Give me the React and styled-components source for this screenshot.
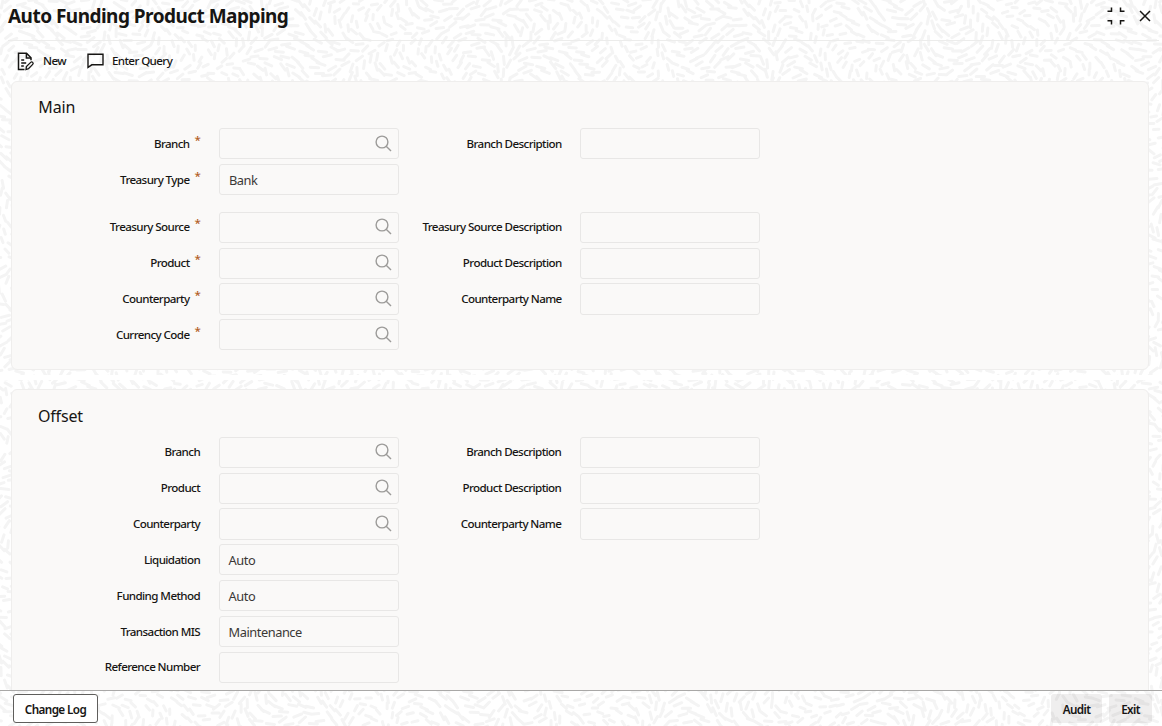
import React from "react";
import styled, { createGlobalStyle } from "styled-components";

const GlobalStyle = createGlobalStyle`
  * {
    box-sizing: border-box;
  }
  body {
    margin: 0;
    overflow: hidden;
    background: #ffffff;
    color: #161513;
    font-family: "Noto Sans", "Open Sans", sans-serif;
  }
`;

// Scattered short strokes that follow a slowly turning direction
const buildStrokes = (width, height) => {
  const parts = [];
  let row = 0;
  for (let y = 2; y < height + 8; y += 8) {
    for (let x = (row % 2) * 5.2; x < width + 8; x += 10.4) {
      const jx = Math.sin(x * 12.9 + y * 7.3) * 2.4;
      const jy = Math.cos(x * 5.1 + y * 9.7) * 2.4;
      const angle =
        2.2 * Math.sin(x / 43 + y / 71) +
        1.8 * Math.cos(y / 37 - x / 67) +
        0.3 * Math.sin(x * 3.3 + y * 1.7);
      const len = 2.6 + Math.abs(Math.sin(x * 2.1 + y)) * 1.6;
      const dx = Math.cos(angle) * len;
      const dy = Math.sin(angle) * len;
      const cx = x + jx;
      const cy = y + jy;
      parts.push(
        `M${(cx - dx).toFixed(1)} ${(cy - dy).toFixed(1)}L${(cx + dx).toFixed(1)} ${(cy + dy).toFixed(1)}`
      );
    }
    row += 1;
  }
  return parts.join("");
};

const strokes = buildStrokes(1162, 726);

const Screen = styled.div`
  position: relative;
  display: flex;
  flex-direction: column;
  width: 1162px;
  height: 726px;
  overflow: hidden;
`;

const Texture = styled.svg`
  position: absolute;
  inset: 0;
  z-index: -1;
`;

const Header = styled.header`
  display: flex;
  align-items: center;
  justify-content: space-between;
  flex: none;
  height: 41px;
  margin: 0 3px 0 8px;
  padding: 0 8px 8px 0;
  border-bottom: 1px solid #ececeb;
`;

const Title = styled.h1`
  margin: 0;
  font-size: 19px;
  font-weight: 700;
  line-height: 26px;
  letter-spacing: -0.53px;
  white-space: nowrap;
`;

const WindowActions = styled.div`
  display: flex;
  align-items: center;
  gap: 14px;
`;

const Toolbar = styled.nav`
  display: flex;
  align-items: center;
  gap: 21px;
  flex: none;
  height: 40px;
  padding-left: 17px;
`;

const ToolButton = styled.button`
  display: flex;
  align-items: center;
  gap: 8px;
  padding: 0;
  border: none;
  background: none;
  color: #161513;
  font-family: inherit;
  font-size: 11.6px;
  font-weight: 500;
  line-height: 18px;
  letter-spacing: -0.6px;
`;

const Content = styled.main`
  display: flex;
  flex-direction: column;
  flex: 1;
  min-height: 0;
  overflow: hidden;
`;

const Panel = styled.section`
  flex: none;
  height: ${(p) => p.$height}px;
  margin-left: ${(p) => p.$left}px;
  width: 1138px;
  padding: 13px 26px 0;
  background: #faf9f8;
  border: 1px solid #efeeed;
  border-radius: 6px;
`;

const Divider = styled.div`
  flex: none;
  height: 5px;
  margin: 5px 0 9px;
  background: #ffffff;
`;

const PanelTitle = styled.h2`
  margin: 0;
  padding-top: ${(p) => p.$offset || 0}px;
  height: ${(p) => 33.2 + (p.$offset || 0)}px;
  font-size: 16px;
  font-weight: 400;
  line-height: 24px;
  letter-spacing: -0.15px;
`;

const Row = styled.div`
  display: grid;
  grid-template-columns: 162.2px 180px 144.2px 180px;
  column-gap: 18.5px;
  align-items: center;
  height: 31.2px;
  margin-bottom: ${(p) => (p.$spaced ? 16.6 : 4.65)}px;
`;

const Label = styled.label`
  display: flex;
  justify-content: flex-end;
  font-size: 11.6px;
  font-weight: 500;
  line-height: 18px;
  letter-spacing: -0.59px;
  white-space: nowrap;
`;

const Required = styled.span`
  width: 11px;
  padding-left: 5px;
  margin-top: -4px;
  color: #b35f26;
`;

const Field = styled.div`
  display: flex;
  align-items: center;
  justify-content: space-between;
  height: 31.2px;
  padding: 0 5.5px 0 9px;
  border: 1px solid #e8e7e6;
  border-radius: 3px;
  font-size: 12.8px;
  font-weight: 400;
  letter-spacing: -0.45px;
  color: #3a3836;
`;

const Footer = styled.footer`
  display: flex;
  align-items: flex-start;
  gap: 7px;
  flex: none;
  height: 36px;
  padding: 3px 10px 0 13px;
  border-top: 1px solid #a9a8a7;
`;

const FooterButton = styled.button`
  width: ${(p) => p.$width}px;
  height: 29px;
  padding: 0;
  border: 1px solid ${(p) => (p.$outlined ? "#5f5e5c" : "transparent")};
  border-radius: 3px;
  background: ${(p) => (p.$outlined ? "#ffffff" : "rgba(22, 21, 19, 0.07)")};
  color: #161513;
  font-family: inherit;
  font-size: 11.7px;
  font-weight: 600;
  letter-spacing: -0.6px;
`;

const Spacer = styled.div`
  flex: 1;
`;

const SearchIcon = () => (
  <svg width="17" height="18" viewBox="0 0 17 18" fill="none" stroke="#9c9b99" strokeWidth="1.4">
    <circle cx="7" cy="7" r="5.9" />
    <path d="M11.2 11.2L16 16" />
  </svg>
);

const NewIcon = () => (
  <svg width="18" height="19" viewBox="0 0 18 19" fill="none" stroke="#161513" strokeWidth="1.5">
    <path d="M7.5 17.4H1.5V1.2h8L14 5.8v2.4" />
    <path d="M9.4 1.4V6H14" />
    <path d="M4.2 8h3M4.2 11h5M4.2 14h2.6" />
    <path d="M9 17.5l.4-2.9 4.3-4.2c.6-.6 1.5-.5 2 0s.6 1.4 0 2l-4.2 4.3z" strokeWidth="1.3" />
  </svg>
);

const QueryIcon = () => (
  <svg width="17" height="16" viewBox="0 0 17 16" fill="none" stroke="#161513" strokeWidth="1.4">
    <path d="M1 1.2h15v10.6H4.8L1 14.4z" />
  </svg>
);

const CollapseIcon = () => (
  <svg width="18" height="18" viewBox="0 0 18 18" fill="none" stroke="#161513" strokeWidth="1.5">
    <path d="M0.5 4.2h4V0.5M17.5 4.2h-4V0.5M0.5 13.8h4v3.7M17.5 13.8h-4v3.7" />
  </svg>
);

const CloseIcon = () => (
  <svg width="12" height="12" viewBox="0 0 12 12" fill="none" stroke="#161513" strokeWidth="1.5">
    <path d="M1 1l10 10M11 1L1 11" />
  </svg>
);

const mainRows = [
  { label: "Branch", required: true, lookup: true, description: "Branch Description" },
  { label: "Treasury Type", required: true, value: "Bank", spaced: true },
  { label: "Treasury Source", required: true, lookup: true, description: "Treasury Source Description" },
  { label: "Product", required: true, lookup: true, description: "Product Description" },
  { label: "Counterparty", required: true, lookup: true, description: "Counterparty Name" },
  { label: "Currency Code", required: true, lookup: true },
];

const offsetRows = [
  { label: "Branch", lookup: true, description: "Branch Description" },
  { label: "Product", lookup: true, description: "Product Description" },
  { label: "Counterparty", lookup: true, description: "Counterparty Name" },
  { label: "Liquidation", value: "Auto" },
  { label: "Funding Method", value: "Auto" },
  { label: "Transaction MIS", value: "Maintenance" },
  { label: "Reference Number" },
];

const FormRow = ({ row }) => (
  <Row $spaced={row.spaced}>
    <Label>
      {row.label}
      {row.required && <Required>*</Required>}
    </Label>
    <Field>
      <span>{row.value}</span>
      {row.lookup && <SearchIcon />}
    </Field>
    {row.description && (
      <>
        <Label>{row.description}</Label>
        <Field />
      </>
    )}
  </Row>
);

const App = () => (
  <Screen>
    <GlobalStyle />
    <Texture width="1162" height="726" viewBox="0 0 1162 726">
      <path d={strokes} stroke="#f4f4f4" strokeWidth="3" strokeLinecap="round" fill="none" />
    </Texture>
    <Header>
      <Title>Auto Funding Product Mapping</Title>
      <WindowActions>
        <CollapseIcon />
        <CloseIcon />
      </WindowActions>
    </Header>
    <Toolbar>
      <ToolButton>
        <NewIcon />
        New
      </ToolButton>
      <ToolButton>
        <QueryIcon />
        Enter Query
      </ToolButton>
    </Toolbar>
    <Content>
      <Panel $left={11.3} $height={289}>
        <PanelTitle>Main</PanelTitle>
        {mainRows.map((row) => (
          <FormRow key={row.label} row={row} />
        ))}
      </Panel>
      <Divider />
      <Panel $left={10.9} $height={320}>
        <PanelTitle $offset={0.6}>Offset</PanelTitle>
        {offsetRows.map((row) => (
          <FormRow key={row.label} row={row} />
        ))}
      </Panel>
    </Content>
    <Footer>
      <FooterButton $width={85} $outlined>
        Change Log
      </FooterButton>
      <Spacer />
      <FooterButton $width={51}>Audit</FooterButton>
      <FooterButton $width={43}>Exit</FooterButton>
    </Footer>
  </Screen>
);

export default App;
